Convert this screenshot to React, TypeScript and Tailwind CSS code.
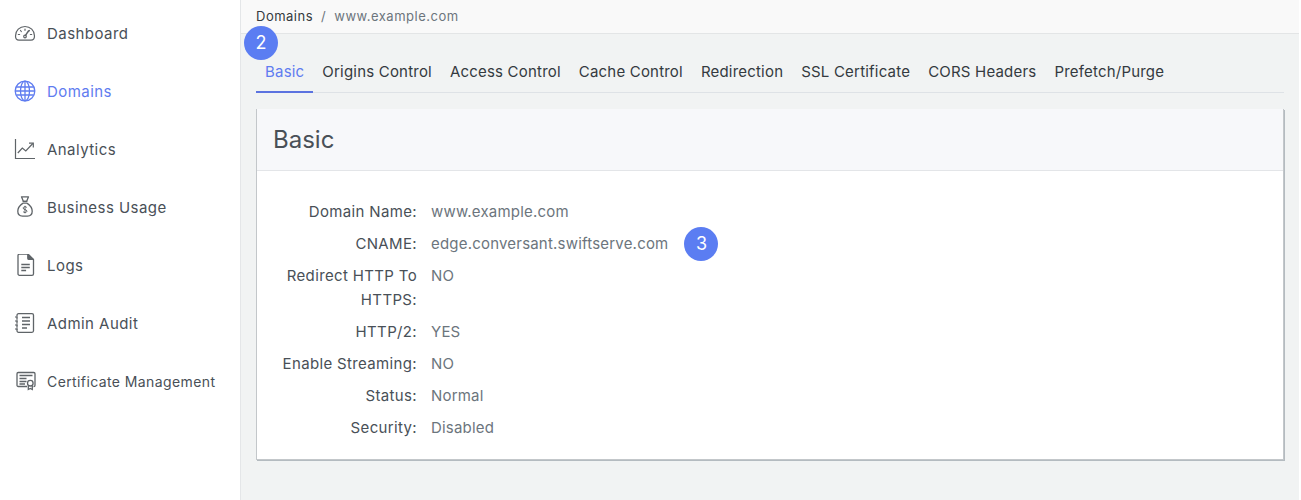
import React from 'react';

const ic = 'w-[22px] h-[22px] shrink-0';

const DashboardIcon = () => (
  <svg viewBox="0 0 22 22" className={ic} fill="none" stroke="currentColor" strokeWidth="1.2" strokeLinecap="round">
    <path d="M5 18.2h12c2.2 0 3.5-1.4 3.5-4.2C20.5 8.500 16.300 4.500 11 4.500S1.500 8.500 1.500 14c0 2.800 1.300 4.200 3.500 4.200z" />
    <path d="M11 7v1.300M6.500 8.500l.8 1M4.300 12.500h1.300M15.500 8.500l-.8 1M17.700 12.500h-1.300" />
    <path d="M14.500 8.800l-3 4.600" strokeWidth="1.500" />
    <circle cx="11" cy="14.500" r="1.300" />
  </svg>
);

const GlobeIcon = () => (
  <svg viewBox="0 0 22 22" className={ic} fill="none" stroke="currentColor" strokeWidth="1.3">
    <circle cx="11" cy="11" r="9.800" />
    <ellipse cx="11" cy="11" rx="4.500" ry="9.800" />
    <path d="M11 1.200v19.600M2.200 7h17.600M2.200 15h17.600M1.200 11h19.600" />
  </svg>
);

const ChartIcon = () => (
  <svg viewBox="0 0 22 22" className={ic} fill="none" stroke="currentColor" strokeWidth="1.2">
    <path d="M1.500 1v19.500h19.500" />
    <path d="M3.800 15l4.500-5 3.500 3 7-7.500" />
    <path d="M15 5.200h4.300v4.300" />
  </svg>
);

const MoneyBagIcon = () => (
  <svg viewBox="0 0 22 22" className={ic} fill="none" stroke="currentColor" strokeWidth="1.3" strokeLinejoin="round">
    <path d="M7.500.8h7l-1.800 4.500H9.300z" />
    <path d="M8.700 5.300h4.600M9 7.100h4" />
    <path d="M9 7.100C5.800 9.300 3.800 12.300 3.800 15.300c0 3 2 4.800 4.700 4.800h5c2.700 0 4.700-1.800 4.700-4.800 0-3-2-6-5.200-8.200" />
    <path d="M12.800 11.500c-.4-.6-1-.8-1.800-.8-1 0-1.800.5-1.800 1.400 0 2 3.700 1 3.700 3 0 .9-.8 1.400-1.900 1.400-.8 0-1.500-.3-1.900-.9M11 9.800v7.500" strokeWidth="1" />
  </svg>
);

const FileIcon = () => (
  <svg viewBox="0 0 22 22" className={ic} fill="none" stroke="currentColor" strokeWidth="1.300" strokeLinejoin="round">
    <path d="M5.500 0h8.500l5.500 5.500v14.200c0 1-.7 1.600-1.500 1.600H5.500c-.8 0-1.500-.6-1.500-1.600V1.600C4 .6 4.700 0 5.500 0z" />
    <path d="M13.800 0v4.200c0 .7.500 1.200 1.200 1.200h4.500" fill="currentColor" />
    <path d="M7.300 10.500h8.500M7.300 13.500h8.500M7.300 16.500h4.800" />
  </svg>
);

const AuditIcon = () => (
  <svg viewBox="0 0 22 22" className={ic} fill="none" stroke="currentColor" strokeWidth="1.300">
    <rect x="3" y="1.700" width="16.500" height="18.600" rx="1.500" />
    <path d="M1.300 4.700h3M1.300 8.500h3M1.300 12.500h3M1.300 16.500h3" strokeWidth="1.500" stroke="#fff" />
    <path d="M1.300 5h2.500M1.300 9h2.500M1.300 13h2.500M1.300 17h2.500" strokeWidth="1.300" />
    <path d="M8 5.500h8M8 9h8M8 12.500h8M8 16h5" />
  </svg>
);

const CertIcon = () => (
  <svg viewBox="0 0 22 22" className={ic} fill="none" stroke="currentColor" strokeWidth="1.300">
    <g transform="translate(0 -1)">
      <path d="M13 17.500H4.200c-.7 0-1.200-.5-1.200-1.200V4.700c0-.7.500-1.200 1.200-1.200h15.600c.7 0 1.200.5 1.200 1.200v11.600c0 .7-.5 1.200-1.200 1.200h-.3" />
      <path d="M5.500 6.500H18.500M5.500 9.500h7M5.500 12.500h7M5.500 15h5.500" />
      <circle cx="16.300" cy="14.200" r="2.800" />
      <path d="M14.300 16.500v4l2-1 2 1v-4" />
    </g>
  </svg>
);

const navItems = [
  { label: 'Dashboard', icon: <DashboardIcon /> },
  { label: 'Domains', icon: <GlobeIcon />, active: true },
  { label: 'Analytics', icon: <ChartIcon /> },
  { label: 'Business Usage', icon: <MoneyBagIcon /> },
  { label: 'Logs', icon: <FileIcon /> },
  { label: 'Admin Audit', icon: <AuditIcon /> },
  { label: 'Certificate Management', icon: <CertIcon />, small: true },
];

const tabs = ['Basic', 'Origins Control', 'Access Control', 'Cache Control', 'Redirection', 'SSL Certificate', 'CORS Headers', 'Prefetch/Purge'];

const fields = [
  { label: 'Domain Name:', value: 'www.example.com' },
  { label: 'CNAME:', value: 'edge.conversant.swiftserve.com', badge: true },
  { label: 'Redirect HTTP To HTTPS:', value: 'NO' },
  { label: 'HTTP/2:', value: 'YES' },
  { label: 'Enable Streaming:', value: 'NO' },
  { label: 'Status:', value: 'Normal' },
  { label: 'Security:', value: 'Disabled' },
];

const Badge = ({ n, className = '' }: { n: number; className?: string }) => (
  <span className={`flex h-[34px] w-[34px] items-center justify-center rounded-full bg-[#5b7df2] text-[18px] tracking-normal text-white ${className}`}>{n}</span>
);

export default function App() {
  return (
    <div className="flex h-[500px] w-[1301px] overflow-hidden bg-white text-[15px] leading-6 tracking-[0.2px] [font-family:Inter,sans-serif]">
      <aside className="w-[241px] shrink-0 border-r border-[#e4e6e8] pt-1">
        {navItems.map((item) => (
          <div key={item.label} className={`flex h-[58px] items-center gap-[11px] pl-[14px] ${item.active ? 'text-[#5f7cf0]' : 'text-[#495057]'}`}>
            <span className={item.active ? 'text-[#5f7cf0]' : 'text-[#5f6468]'}>{item.icon}</span>
            <span className={`pt-[2px] ${item.small ? 'text-[14px] tracking-[0.4px]' : 'tracking-[0.45px]'}`}>{item.label}</span>
          </div>
        ))}
      </aside>
      <main className="relative mr-[2px] flex-1 bg-[#f1f3f3]">
        <div className="flex h-[34px] items-center gap-2 border-b border-[#e3e5e6] bg-[#f9f9f9] pb-[2px] pl-[15px] text-[13px] tracking-[0.5px]">
          <span className="text-[#343a40]">Domains</span>
          <span className="text-[#6c757d]">/</span>
          <span className="text-[#6c757d]">www.example.com</span>
        </div>
        <Badge n={2} className="absolute left-[3px] top-[26px]" />
        <div className="pl-[15px] pr-[15px]">
          <div className="flex h-[59px] items-end border-b border-[#dee2e6]">
            {tabs.map((t, i) => (
              <div key={t} className={`flex h-[44px] items-center px-[9px] pt-[4px] ${i === 0 ? '-mb-px border-b-2 border-[#5b73e0] text-[#5f7cf0]' : 'text-[#343a40]'}`}>
                {t}
              </div>
            ))}
          </div>
          <section className="mt-4 h-[351px] border-x border-b border-[#c3c7ca] bg-white shadow-[1px_1px_0_#b4bbc0]">
            <div className="flex h-[62px] items-center border-b border-[#e3e5e8] bg-[#f7f8fa] pl-4 text-[24px] tracking-normal text-[#495057]">Basic</div>
            <div className="pt-[29px]">
              {fields.map((f) => (
                <div key={f.label} className="flex pb-2">
                  <div className="ml-[14px] w-[146px] shrink-0 text-right tracking-[0.35px] text-[#495057]">{f.label}</div>
                  <div className="ml-[14px] text-[#6c757d]">{f.value}</div>
                  {f.badge && <Badge n={3} className="-my-[5px] ml-[16px]" />}
                </div>
              ))}
            </div>
          </section>
        </div>
      </main>
    </div>
  );
}
